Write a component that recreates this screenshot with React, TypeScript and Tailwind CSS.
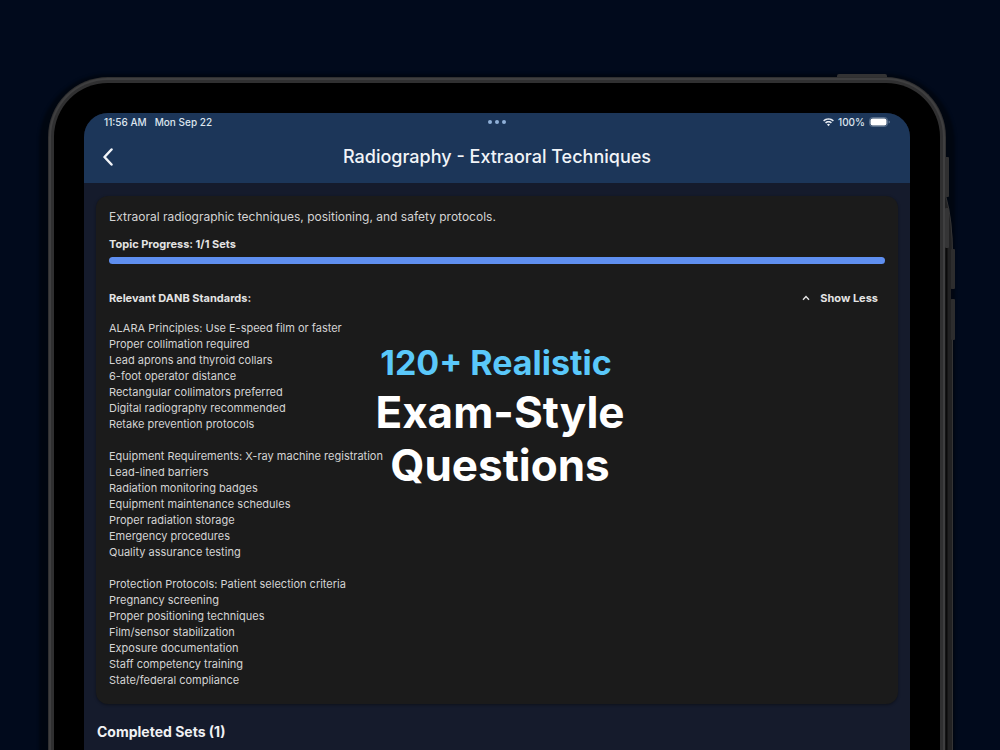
import React, { useState } from 'react'

interface standardProps {
    lines: string[],
}

const standards: string[][] = [
    [
        'ALARA Principles: Use E-speed film or faster',
        'Proper collimation required',
        'Lead aprons and thyroid collars',
        '6-foot operator distance',
        'Rectangular collimators preferred',
        'Digital radiography recommended',
        'Retake prevention protocols',
    ],
    [
        'Equipment Requirements: X-ray machine registration',
        'Lead-lined barriers',
        'Radiation monitoring badges',
        'Equipment maintenance schedules',
        'Proper radiation storage',
        'Emergency procedures',
        'Quality assurance testing',
    ],
    [
        'Protection Protocols: Patient selection criteria',
        'Pregnancy screening',
        'Proper positioning techniques',
        'Film/sensor stabilization',
        'Exposure documentation',
        'Staff competency training',
        'State/federal compliance',
    ],
]

const WifiIcon: React.FC = () => (
    <svg width="11" height="9" viewBox="0 0 22 17" fill="#e6ebf2" aria-hidden="true">
        <path d="M11 0C6.8 0 3 1.6 0.2 4.3L2.3 6.6C4.6 4.4 7.6 3.1 11 3.1s6.4 1.3 8.7 3.5l2.1-2.3C19 1.6 15.2 0 11 0Z" />
        <path d="M11 5.6c-2.7 0-5.1 1-6.9 2.7l2.2 2.3C7.5 9.4 9.2 8.7 11 8.7s3.5.7 4.7 1.9l2.2-2.3C16.1 6.6 13.7 5.6 11 5.6Z" />
        <path d="M11 11.2c-1.2 0-2.2.4-3 1.2l3 3.6 3-3.6c-.8-.8-1.8-1.2-3-1.2Z" />
    </svg>
)

const BatteryIcon: React.FC = () => (
    <svg width="21" height="10" viewBox="0 0 21 10" aria-hidden="true">
        <rect x="0.5" y="0.5" width="18" height="9" rx="3" fill="none" stroke="#7d92ab" strokeOpacity="0.6" />
        <rect x="1.5" y="1.5" width="16" height="7" rx="2" fill="#fff" />
        <path d="M19.7 3.5c.7.3 1 .8 1 1.5s-.3 1.2-1 1.5Z" fill="#7d92ab" />
    </svg>
)

// power and volume keys plus the edge of the body behind
const DeviceEdge: React.FC = () => (
    <svg className="absolute top-0 left-full -ml-1" width="20" height="1200" viewBox="0 0 20 1200" aria-hidden="true">
        <path d="M3 118Q11 142 11 180V1200H3Z" fill="#222223" />
        <path d="M4 120Q10.5 142 10.5 180V1200" fill="none" stroke="#343435" />
        <path d="M4.5 170V1200" stroke="#0a0a0b" strokeWidth="2" />
        <rect x="3" y="80" width="4" height="40" rx="1" fill="#303031" />
        <rect x="3" y="131" width="4" height="40" rx="1" fill="#353536" />
        <rect x="9" y="172" width="4" height="40" rx="1" fill="#2d2d2e" />
        <rect x="9" y="222" width="4" height="41" rx="1" fill="#2d2d2e" />
        <rect x="9" y="212" width="2" height="10" fill="#020611" />
    </svg>
)

const StandardBlock: React.FC<standardProps> = ({ lines }) => {
    return (
        <ul>
            {lines.map((line) => (
                <li key={line}>{line}</li>
            ))}
        </ul>
    )
}

const Header: React.FC = () => {
    return (
        <header className="bg-[#1c3659] text-[#f1f4f8]">
            <div className="grid grid-cols-3 items-center h-[18px] px-5 text-[10px] leading-4 font-medium text-[#dde5ee]">
                <div className="flex gap-2">
                    <span>11:56 AM</span>
                    <span>Mon Sep 22</span>
                </div>
                <div className="flex justify-center gap-[3px]">
                    <span className="size-1 rounded-full bg-[#8fb0d8]" />
                    <span className="size-1 rounded-full bg-[#8fb0d8]" />
                    <span className="size-1 rounded-full bg-[#8fb0d8]" />
                </div>
                <div className="flex items-center justify-end gap-1">
                    <WifiIcon />
                    <span>100%</span>
                    <BatteryIcon />
                </div>
            </div>
            <div className="grid grid-cols-[40px_1fr_40px] items-center h-[52px]">
                <button type="button" aria-label="Back" className="flex justify-end pr-[11px]">
                    <svg width="10" height="18" viewBox="0 0 10 18" fill="none" stroke="currentColor" strokeWidth="2.5" strokeLinecap="round" strokeLinejoin="round">
                        <path d="M8.5 1.5L1.5 9l7 7.5" />
                    </svg>
                </button>
                <h1 className="text-center text-[18px] leading-6 font-medium">Radiography - Extraoral Techniques</h1>
            </div>
        </header>
    )
}

const TopicCard: React.FC = () => {
    const [open, setOpen] = useState(true)

    return (
        <section className="rounded-xl bg-[#1b1b1b] p-[13px] pb-4 shadow-[0_1px_3px_rgba(0,0,0,0.4)] text-[#d4d4d4] text-[11px] leading-4">
            <p className="text-[12px]">Extraoral radiographic techniques, positioning, and safety protocols.</p>
            <label htmlFor="topic-progress" className="block mt-[11px] font-bold text-[#e4e4e4]">Topic Progress: 1/1 Sets</label>
            <progress
                id="topic-progress"
                value={1}
                max={1}
                className="block mt-[5px] h-[7px] w-full appearance-none overflow-hidden rounded-full bg-[#5f8ff0] [&::-webkit-progress-bar]:bg-[#333333] [&::-webkit-progress-value]:bg-[#5f8ff0]"
            />
            <div className="flex items-center justify-between mt-[26px] pr-[7px] font-bold text-[#e4e4e4]">
                <h2>Relevant DANB Standards:</h2>
                <button type="button" className="flex items-center gap-[10px]" onClick={() => setOpen(!open)}>
                    <svg className={open ? '' : 'rotate-180'} width="8" height="6" viewBox="0 0 8 6" fill="none" stroke="currentColor" strokeWidth="1.4" aria-hidden="true">
                        <path d="M1 4.7L4 1.5l3 3.2" />
                    </svg>
                    <span>{open ? 'Show Less' : 'Show More'}</span>
                </button>
            </div>
            {open ?
                <div className="flex flex-col gap-4 mt-[14px]">
                    {standards.map((lines) => (
                        <StandardBlock key={lines[0]} lines={lines} />
                    ))}
                </div>
                :
                    <></>
            }
        </section>
    )
}

const App: React.FC = () => {
    return (
        <main className="relative h-screen overflow-hidden flex flex-col bg-[#010a1c] pt-[77px] pl-12 pr-[54px] font-['Inter',sans-serif]">
            <div className="relative flex-1 flex flex-col">
                <div className="relative flex-1 flex flex-col rounded-t-[60px] border-x-6 border-t-6 border-[#303031] bg-black px-[30px] pt-[30px] shadow-[0_6px_3px_9px_rgba(0,0,0,0.4)]">
                    <div className="absolute -inset-x-[5px] -top-[5px] bottom-0 rounded-t-[59px] border-x-2 border-t-2 border-[#3f3f40]" />
                    <div className="relative flex-1 rounded-t-3xl overflow-hidden bg-[#151b2c]">
                        <Header />
                        <div className="px-3 pt-[13px]">
                            <TopicCard />
                            <h2 className="mt-4 pl-px text-[14px] leading-6 font-bold text-[#f0f1f4]">Completed Sets (1)</h2>
                        </div>
                    </div>
                </div>
                <div className="absolute -top-[3px] right-[59px] h-[3px] w-[50px] rounded-t-xs bg-[#333334]" />
                <DeviceEdge />
            </div>
            <div className="absolute inset-x-0 top-[341px] text-center font-bold pointer-events-none">
                <p className="mb-px pr-2 text-[34px] leading-[44px] text-[#5ac8fa]">120+ Realistic</p>
                <p className="text-[44px] leading-[53px] text-white">Exam-Style<br />Questions</p>
            </div>
        </main>
    )
}

export default App
